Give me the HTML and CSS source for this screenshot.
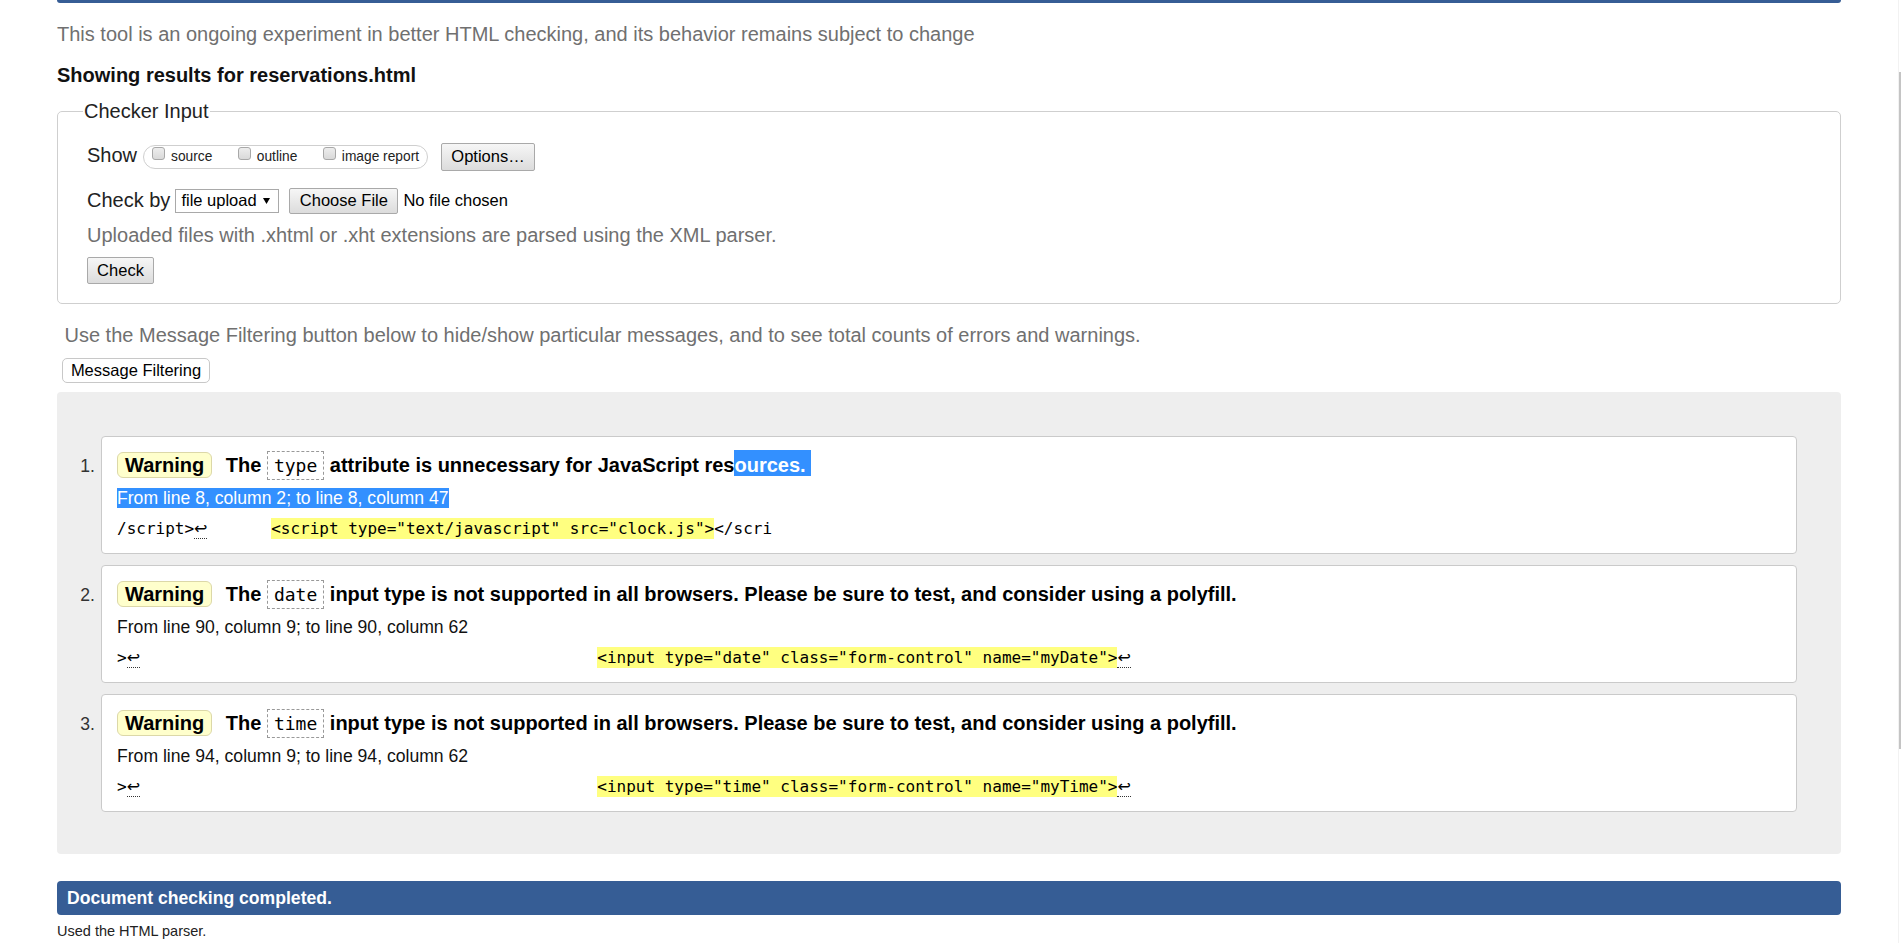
FILE: index.html
```html
<!DOCTYPE html>
<html lang="en">
<head>
<meta charset="utf-8">
<title>Nu Html Checker</title>
<link rel="stylesheet" href="styles.css">
</head>
<body>
<div class="page">
  <div class="topbar"></div>
  <p class="intro">This tool is an ongoing experiment in better HTML checking, and its behavior remains subject to change</p>
  <h2 class="showing">Showing results for reservations.html</h2>
  <fieldset class="checker">
    <legend>Checker Input</legend>
    <div class="row row-show">
      <span class="lbl">Show</span>
      <span class="pill">
        <label class="opt"><span class="cb"></span><span class="opt-text">source</span></label>
        <label class="opt"><span class="cb"></span><span class="opt-text">outline</span></label>
        <label class="opt"><span class="cb"></span><span class="opt-text">image report</span></label>
      </span>
      <button class="btn btn-options" type="button">Options…</button>
    </div>
    <div class="row row-check">
      <span class="lbl">Check by</span>
      <span class="select"><span>file upload</span><svg class="caret" width="7" height="6" viewBox="0 0 7 6"><polygon points="0,0 7,0 3.5,6" fill="#000"/></svg></span>
      <button class="btn btn-file" type="button">Choose File</button>
      <span class="nofile">No file chosen</span>
    </div>
    <p class="hint">Uploaded files with .xhtml or .xht extensions are parsed using the XML parser.</p>
    <button class="btn btn-check" type="button">Check</button>
  </fieldset>
  <p class="filter-note">Use the Message Filtering button below to hide/show particular messages, and to see total counts of errors and warnings.</p>
  <button class="btn-filter" type="button">Message Filtering</button>
  <ol class="results">
    <li class="msg">
      <span class="num">1.</span>
      <div class="card">
        <p class="title"><strong class="badge">Warning</strong> The <code class="attr">type</code> attribute is unnecessary for JavaScript res<span class="sel">ources.&nbsp;</span></p>
        <p class="loc"><span class="sel">From line 8, column 2; to line 8, column 47</span></p>
        <p class="extract"><code>/script&gt;<span class="lf">↩</span>&#9;<b>&lt;script type="text/javascript" src="clock.js"&gt;</b>&lt;/scri</code></p>
      </div>
    </li>
    <li class="msg">
      <span class="num">2.</span>
      <div class="card">
        <p class="title"><strong class="badge">Warning</strong> The <code class="attr">date</code> input type is not supported in all browsers. Please be sure to test, and consider using a polyfill.</p>
        <p class="loc">From line 90, column 9; to line 90, column 62</p>
        <p class="extract indented"><code>&gt;<span class="lf">↩</span>                                               <b>&lt;input type="date" class="form-control" name="myDate"&gt;</b><span class="lf">↩</span></code></p>
      </div>
    </li>
    <li class="msg">
      <span class="num">3.</span>
      <div class="card">
        <p class="title"><strong class="badge">Warning</strong> The <code class="attr">time</code> input type is not supported in all browsers. Please be sure to test, and consider using a polyfill.</p>
        <p class="loc">From line 94, column 9; to line 94, column 62</p>
        <p class="extract indented"><code>&gt;<span class="lf">↩</span>                                               <b>&lt;input type="time" class="form-control" name="myTime"&gt;</b><span class="lf">↩</span></code></p>
      </div>
    </li>
  </ol>
  <div class="done">Document checking completed.</div>
  <p class="parser">Used the HTML parser.</p>
</div>
<div class="scrollbar"><div class="thumb"></div></div>
</body>
</html>
```
FILE: styles.css
```css
html {
  overflow: hidden;
}
body {
  margin: 0;
  font-family: "Liberation Sans", Arial, Helvetica, sans-serif;
  color: #000;
  background: #fff;
}
.page {
  padding: 0 61px 0 57px;
}
.topbar {
  height: 3px;
  background: #365d95;
  border-radius: 0 0 4px 4px;
}
.intro {
  margin: 20px 0 0;
  font-size: 20px;
  line-height: 23px;
  color: #707070;
}
.showing {
  margin: 18px 0 0;
  font-size: 20px;
  line-height: 23px;
  font-weight: bold;
  color: #111;
}
.checker {
  margin: 13px 0 0;
  padding: 19px 20px 19px 29px;
  border: 1px solid #cfcfcf;
  border-radius: 5px;
  min-width: 0;
}
.checker legend {
  padding: 0 1px;
  margin-left: -4px;
  font-size: 20px;
  line-height: 23px;
  color: #222;
}
.row {
  display: flex;
  align-items: center;
}
.row-show {
  height: 29px;
}
.row-check {
  height: 27px;
  margin-top: 16px;
}
.lbl {
  font-size: 20px;
  line-height: 23px;
  color: #222;
}
.row-show .lbl {
  margin: 0 6px 2px 0;
}
.row-check .lbl {
  margin-right: 5px;
}
.pill {
  display: flex;
  align-items: flex-start;
  height: 22px;
  padding: 0 8px;
  border: 1px solid #cfcfcf;
  border-radius: 12px;
}
.opt {
  display: flex;
  align-items: flex-start;
}
.opt + .opt {
  margin-left: 25.5px;
}
.cb {
  width: 11px;
  height: 11px;
  margin-top: 1.5px;
  border: 1px solid #a8a8a8;
  border-radius: 3px;
  background: linear-gradient(#ededed, #d9d9d9);
}
.opt-text {
  margin-left: 6px;
  font-size: 13.75px;
  line-height: 22px;
  color: #222;
}
.btn {
  box-sizing: border-box;
  padding: 0;
  font-family: inherit;
  font-size: 16.5px;
  color: #000;
  background: linear-gradient(#f6f6f6, #dcdcdc);
  border: 1px solid #a9a9a9;
  border-radius: 2px;
}
.btn-options {
  margin-left: 13px;
  width: 94px;
  height: 28px;
}
.select {
  box-sizing: border-box;
  width: 104px;
  height: 24px;
  display: flex;
  align-items: center;
  justify-content: space-between;
  padding: 0 8px 0 5px;
  border: 1px solid #a9a9a9;
  background: #fff;
  font-size: 16.5px;
}
.caret {
  display: block;
}
.btn-file {
  margin-left: 10px;
  width: 109px;
  height: 26px;
}
.nofile {
  margin-left: 5px;
  font-size: 16.5px;
}
.hint {
  margin: 10px 0 0;
  font-size: 20px;
  line-height: 23px;
  color: #707070;
}
.btn-check {
  display: block;
  margin-top: 10px;
  width: 67px;
  height: 27px;
}
.filter-note {
  margin: 20px 0 0;
  padding-left: 7.5px;
  font-size: 20px;
  line-height: 23px;
  color: #707070;
}
.btn-filter {
  display: block;
  box-sizing: border-box;
  margin: 11px 0 0 5px;
  width: 148px;
  height: 25px;
  padding: 0;
  font-family: inherit;
  font-size: 16.5px;
  color: #000;
  background: #fff;
  border: 1px solid #c8c8c8;
  border-radius: 5px;
}
.results {
  list-style: none;
  margin: 9px 0 0;
  padding: 44px 44px 42px 0;
  background: #eee;
  border-radius: 4px;
}
.msg {
  display: flex;
  align-items: baseline;
}
.msg + .msg {
  margin-top: 11px;
}
.num {
  flex: none;
  box-sizing: border-box;
  width: 44px;
  padding-right: 6px;
  text-align: right;
  font-size: 17.6px;
  color: #333;
}
.card {
  flex: 1;
  min-width: 0;
  background: #fff;
  border: 1px solid #cacaca;
  border-radius: 4px;
  padding: 13px 15px 14px;
}
.title {
  margin: 0;
  font-size: 20px;
  line-height: 30px;
  font-weight: bold;
  white-space: nowrap;
}
.badge {
  display: inline-block;
  padding: 0 7px;
  margin-right: 8px;
  line-height: 24px;
  background: #ffc;
  border: 1px solid #dcd8a8;
  border-radius: 6px;
}
.attr {
  display: inline-block;
  padding: 0 6px;
  line-height: 27px;
  font-family: "DejaVu Sans Mono", monospace;
  font-size: 18px;
  font-weight: normal;
  border: 1px dashed #999;
  background: #fff;
}
.sel {
  background: #3390ff;
  color: #fff;
}
.title .sel {
  padding-top: 4px;
}
.loc {
  margin: 8px 0 0;
  font-size: 17.6px;
  line-height: 20px;
  color: #111;
}
.extract {
  margin: 11px 0 0;
  font-family: "DejaVu Sans Mono", monospace;
  font-size: 16px;
  line-height: 20px;
  white-space: pre;
  tab-size: 8;
}
.extract code {
  font: inherit;
}
.extract b {
  font-weight: normal;
  background: #ffff80;
  padding: 1px 0;
}
.indented b {
  margin-left: 4.5px;
}
.lf {
  font-family: "DejaVu Sans", sans-serif;
  font-size: 16px;
  border-bottom: 1px dotted #333;
}
.done {
  margin-top: 27px;
  height: 34px;
  line-height: 34px;
  padding-left: 10px;
  background: #365d95;
  color: #fff;
  font-weight: bold;
  font-size: 17.6px;
  border-radius: 4px;
}
.parser {
  margin: 8px 0 0;
  font-size: 14.5px;
  line-height: 17px;
  color: #222;
}
.scrollbar {
  position: fixed;
  top: 0;
  right: 0;
  width: 3px;
  height: 100%;
  border-left: 1px solid #f2f2f2;
}
.thumb {
  position: absolute;
  top: 72px;
  left: 0;
  width: 2px;
  height: 677px;
  background: #c4c4c4;
}
```
